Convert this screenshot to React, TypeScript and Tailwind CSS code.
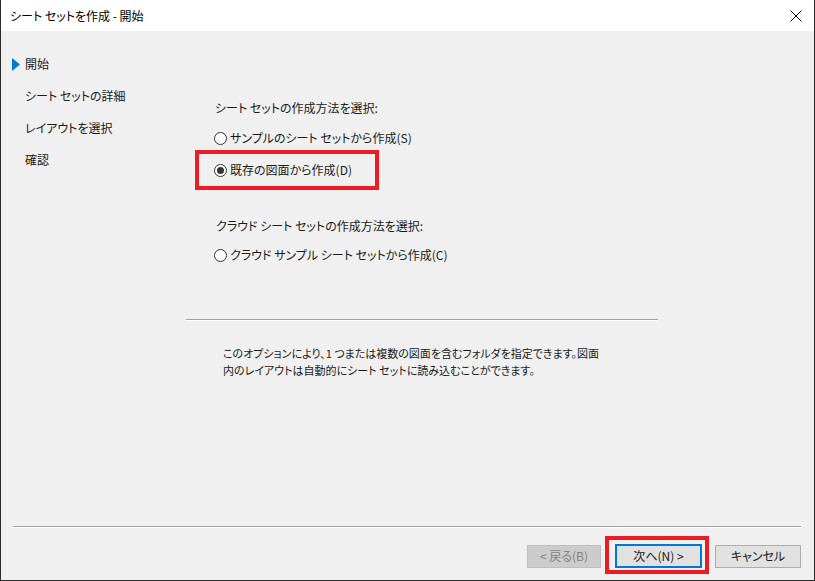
import React from "react";

const font = "font-['Yu_Gothic_UI','Meiryo_UI','Noto_Sans_CJK_JP',sans-serif] [font-feature-settings:'palt']";

function Radio({ checked }: { checked?: boolean }) {
  return (
    <span className="w-[13px] h-[13px] rounded-full border border-[#333333] bg-white flex items-center justify-center shrink-0">
      {checked && <span className="w-[7px] h-[7px] rounded-full bg-[#333333]" />}
    </span>
  );
}

export default function App() {
  return (
    <div className={`w-[815px] h-[581px] flex flex-col bg-[#f0f0f0] border-l border-r border-b border-[#2b2b2b] text-[12px] text-[#1a1a1a] ${font}`}>
      {/* Title bar */}
      <div className="h-[31px] bg-white flex items-center justify-between pl-[9px] pr-[8px] shrink-0">
        <span className="text-[12px] text-black">シート セットを作成 - 開始</span>
        <svg width="14" height="14" viewBox="0 0 14 14" className="mr-[3px]">
          <path d="M1.5 1.5 L12.5 12.5 M12.5 1.5 L1.5 12.5" stroke="#000" strokeWidth="1" />
        </svg>
      </div>

      {/* Body */}
      <div className="flex flex-1">
        {/* Left nav */}
        <div className="w-[185px] pt-[17px] flex flex-col shrink-0">
          <div className="h-[32px] flex items-center pl-[11px]">
            <svg width="8" height="13" viewBox="0 0 8 13" className="mr-[5px]">
              <polygon points="0,0 8,6.5 0,13" fill="#0078d7" />
            </svg>
            <span>開始</span>
          </div>
          <div className="h-[32px] flex items-center pl-[24px]">シート セットの詳細</div>
          <div className="h-[32px] flex items-center pl-[24px]">レイアウトを選択</div>
          <div className="h-[32px] flex items-center pl-[24px]">確認</div>
        </div>

        {/* Main */}
        <div className="relative w-[472px] flex flex-col">
          <div className="h-[20px] mt-[67px] flex items-center pl-[29px]">シート セットの作成方法を選択:</div>
          <div className="h-[32px] mt-[4px] flex items-center pl-[28px] gap-[3px]">
            <Radio />
            <span>サンプルのシート セットから作成(S)</span>
          </div>
          <div className="relative h-[32px] flex items-center pl-[28px] gap-[3px]">
            <Radio checked />
            <span>既存の図面から作成(D)</span>
            <div className="absolute left-[9px] top-[-4px] w-[184px] h-[40px] border-[4px] border-[#ed1c24]" />
          </div>
          <div className="h-[20px] mt-[30px] flex items-center pl-[30px]">クラウド シート セットの作成方法を選択:</div>
          <div className="h-[20px] mt-[9px] flex items-center pl-[28px] gap-[3px]">
            <Radio />
            <span>クラウド サンプル シート セットから作成(C)</span>
          </div>
          <div className="mt-[54px] h-[2px] border-t border-[#a0a0a0] border-b border-b-white" />
          <div className="mt-[24px] pl-[37px] text-[11px] leading-[17px] whitespace-nowrap">
            <div>このオプションにより、1 つまたは複数の図面を含むフォルダを指定できます。図面</div>
            <div>内のレイアウトは自動的にシート セットに読み込むことができます。</div>
          </div>
        </div>
      </div>

      {/* Bottom */}
      <div className="h-[54px] shrink-0 flex flex-col">
        <div className="ml-[12px] mr-[13px] h-[2px] border-t border-[#a0a0a0] border-b border-b-white" />
        <div className="flex justify-end items-center pr-[13px] mt-[16px]">
          <div className="w-[74px] h-[23px] bg-[#cccccc] border border-[#bfbfbf] text-[#838383] flex items-center justify-center whitespace-pre">
            {"< 戻る(B)"}
          </div>
          <div className="relative ml-[14px]">
            <div className="w-[87px] h-[24px] bg-[#e1e1e1] border-2 border-[#0078d7] flex items-center justify-center whitespace-pre">
              {"次へ(N) >"}
            </div>
            <div className="absolute left-[-10px] top-[-8px] w-[104px] h-[38px] border-[4px] border-[#ed1c24]" />
          </div>
          <div className="ml-[13px] w-[86px] h-[23px] bg-[#e1e1e1] border border-[#adadad] flex items-center justify-center">
            キャンセル
          </div>
        </div>
      </div>
    </div>
  );
}
